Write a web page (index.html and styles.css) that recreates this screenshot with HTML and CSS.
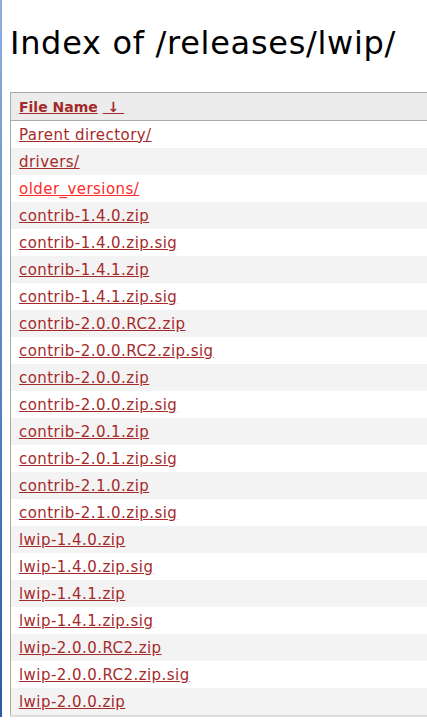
FILE: index.html
```html
<!DOCTYPE html>
<html>
<head>
<meta charset="utf-8">
<title>Index of /releases/lwip/</title>
<link rel="stylesheet" href="styles.css">
</head>
<body>
<h1 class="title">Index of /releases/lwip/</h1>
<table class="listing">
<thead>
<tr><th><a href="#" class="sort">File Name</a> <a href="#" class="sort">&nbsp;↓&nbsp;</a></th></tr>
</thead>
<tbody>
<tr><td><a href="#">Parent directory/</a></td></tr>
<tr><td><a href="#">drivers/</a></td></tr>
<tr><td><a href="#" class="hover">older_versions/</a></td></tr>
<tr><td><a href="#">contrib-1.4.0.zip</a></td></tr>
<tr><td><a href="#">contrib-1.4.0.zip.sig</a></td></tr>
<tr><td><a href="#">contrib-1.4.1.zip</a></td></tr>
<tr><td><a href="#">contrib-1.4.1.zip.sig</a></td></tr>
<tr><td><a href="#">contrib-2.0.0.RC2.zip</a></td></tr>
<tr><td><a href="#">contrib-2.0.0.RC2.zip.sig</a></td></tr>
<tr><td><a href="#">contrib-2.0.0.zip</a></td></tr>
<tr><td><a href="#">contrib-2.0.0.zip.sig</a></td></tr>
<tr><td><a href="#">contrib-2.0.1.zip</a></td></tr>
<tr><td><a href="#">contrib-2.0.1.zip.sig</a></td></tr>
<tr><td><a href="#">contrib-2.1.0.zip</a></td></tr>
<tr><td><a href="#">contrib-2.1.0.zip.sig</a></td></tr>
<tr><td><a href="#">lwip-1.4.0.zip</a></td></tr>
<tr><td><a href="#">lwip-1.4.0.zip.sig</a></td></tr>
<tr><td><a href="#">lwip-1.4.1.zip</a></td></tr>
<tr><td><a href="#">lwip-1.4.1.zip.sig</a></td></tr>
<tr><td><a href="#">lwip-2.0.0.RC2.zip</a></td></tr>
<tr><td><a href="#">lwip-2.0.0.RC2.zip.sig</a></td></tr>
<tr><td><a href="#">lwip-2.0.0.zip</a></td></tr>
</tbody>
</table>
</body>
</html>
```
FILE: styles.css
```css
html {
  overflow: hidden;
  background: linear-gradient(to bottom, #8eaee0, #2c5aa8) left top / 2px 100% no-repeat, #fff;
}
body {
  margin: 0;
  padding: 0 0 0 10px;
  font-family: "DejaVu Sans", Verdana, sans-serif;
  color: #000;
}
.title {
  margin: 0;
  padding-top: 23px;
  height: 92px;
  box-sizing: border-box;
  font-size: 32px;
  font-weight: normal;
  line-height: 40px;
  letter-spacing: 0.7px;
}
.listing {
  width: 100%;
  border-collapse: collapse;
  border-left: 1px solid #aaa;
  border-bottom: 2px solid #ddd;
  font-size: 15px;
}
.listing th {
  text-align: left;
  background: #ececec;
  border-top: 1px solid #aaa;
  border-bottom: 1px solid #aaa;
  height: 27px;
  padding: 0 8px;
  font-weight: bold;
  font-size: 14px;
  letter-spacing: 0;
}
.listing td {
  height: 27px;
  padding: 0 8px;
  letter-spacing: 0.45px;
}
.listing tbody tr:nth-child(even) td {
  background: #f3f3f3;
}
.listing a {
  color: #a52a2a;
}
.listing a.hover {
  color: #ff2a2a;
}
```
